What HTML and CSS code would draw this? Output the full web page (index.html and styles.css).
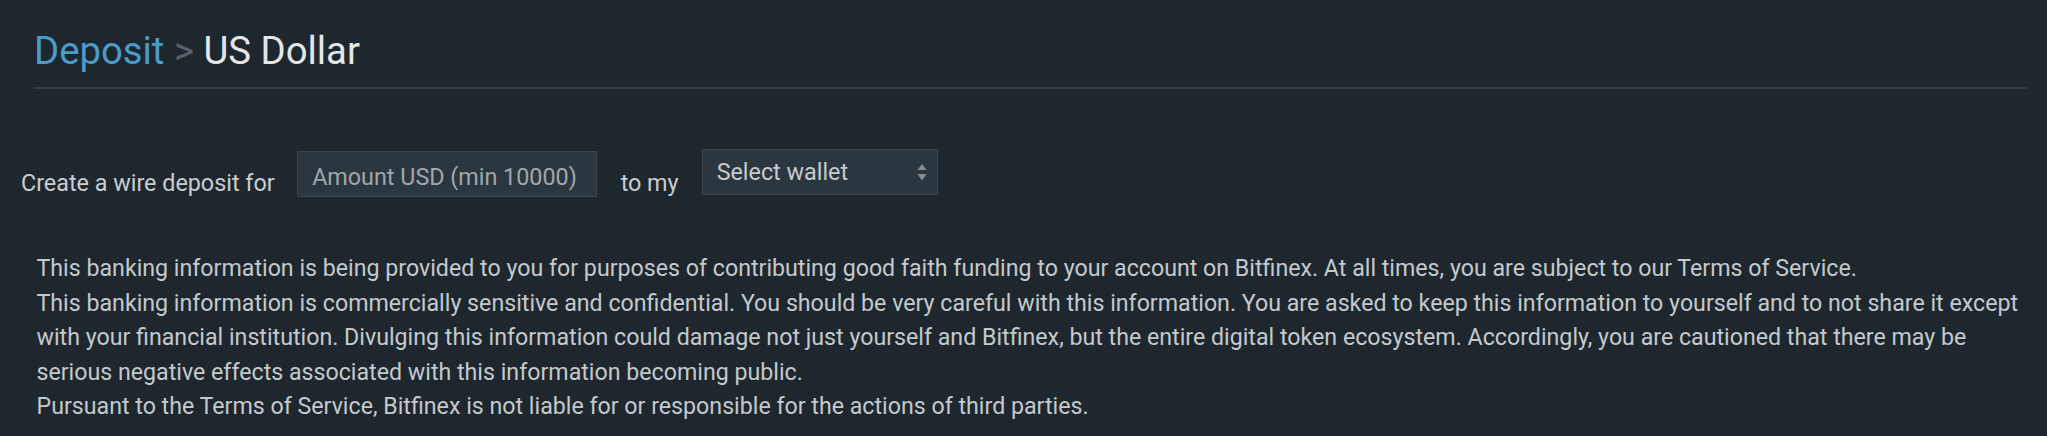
FILE: index.html
```html
<!DOCTYPE html>
<html lang="en">
<head>
<meta charset="utf-8">
<title>Deposit - US Dollar</title>
<link rel="stylesheet" href="styles.css">
</head>
<body>
<div class="page">
  <h1 class="title"><span class="crumb">Deposit</span> <span class="sep">&gt;</span> <span class="current">US Dollar</span></h1>

  <form class="deposit-row">
    <label class="row-label" for="amount">Create a wire deposit for</label>
    <input class="field amount" id="amount" type="text" placeholder="Amount USD (min 10000)">
    <span class="row-label mid">to my</span>
    <div class="select-wrap">
      <select class="field wallet">
        <option>Select wallet</option>
        <option>Exchange</option>
        <option>Margin</option>
        <option>Funding</option>
      </select>
      <svg class="select-arrow" width="10" height="18" viewBox="0 0 10 18" aria-hidden="true">
        <path d="M0.5 7 L5 1 L9.5 7 Z" fill="#858d93"/>
        <path d="M0.5 11 L5 17.5 L9.5 11 Z" fill="#858d93"/>
      </svg>
    </div>
  </form>

  <div class="disclaimer">
    <p>This banking information is being provided to you for purposes of contributing good faith funding to your account on Bitfinex. At all times, you are subject to our Terms of Service.</p>
    <p>This banking information is commercially sensitive and confidential. You should be very careful with this information. You are asked to keep this information to yourself and to not share it except with your financial institution. Divulging this information could damage not just yourself and Bitfinex, but the entire digital token ecosystem. Accordingly, you are cautioned that there may be serious negative effects associated with this information becoming public.</p>
    <p>Pursuant to the Terms of Service, Bitfinex is not liable for or responsible for the actions of third parties.</p>
  </div>
</div>
</body>
</html>
```

FILE: styles.css
```css
html, body {
  margin: 0;
  padding: 0;
  background: #1e272e;
}

body {
  font-family: Roboto, "Liberation Sans", Arial, sans-serif;
  color: #c4c9cd;
}

.page {
  padding: 28px 20px 0 21px;
}

.title {
  margin: 0 0 0 13px;
  padding-bottom: 14px;
  border-bottom: 2px solid #343e45;
  font-size: 38.3px;
  line-height: 45px;
  font-weight: 400;
  letter-spacing: 0;
}

.crumb {
  color: #4b9bcb;
}

.sep {
  color: #59626a;
}

.current {
  color: #e4e6e8;
}

.deposit-row {
  display: flex;
  align-items: flex-start;
  margin-top: 60px;
  height: 48px;
}

.row-label {
  font-size: 23.33px;
  line-height: 30px;
  margin-top: 19px;
  color: #c8cdd1;
}

.row-label.mid {
  margin-left: 23.5px;
  margin-right: 23px;
}

.field {
  box-sizing: border-box;
  height: 46px;
  background: #2b363e;
  border: 1px solid #3b4750;
  border-radius: 0;
  color: #c6cbcf;
  font-family: Roboto, "Liberation Sans", Arial, sans-serif;
  font-size: 23.33px;
  outline: none;
}

.amount {
  width: 300px;
  margin-top: 2px;
  margin-left: 22.5px;
  padding: 6px 14px 0;
}

.amount::placeholder {
  color: #a0a7ac;
}

.select-wrap {
  position: relative;
}

.wallet {
  width: 236px;
  padding: 0 14px;
  -webkit-appearance: none;
  appearance: none;
}

.select-arrow {
  position: absolute;
  top: 14px;
  right: 11px;
  pointer-events: none;
}

.disclaimer {
  margin: 54px 0 0 15.5px;
  font-size: 23.2px;
  line-height: 34.5px;
}

.disclaimer p {
  margin: 0;
}
```
